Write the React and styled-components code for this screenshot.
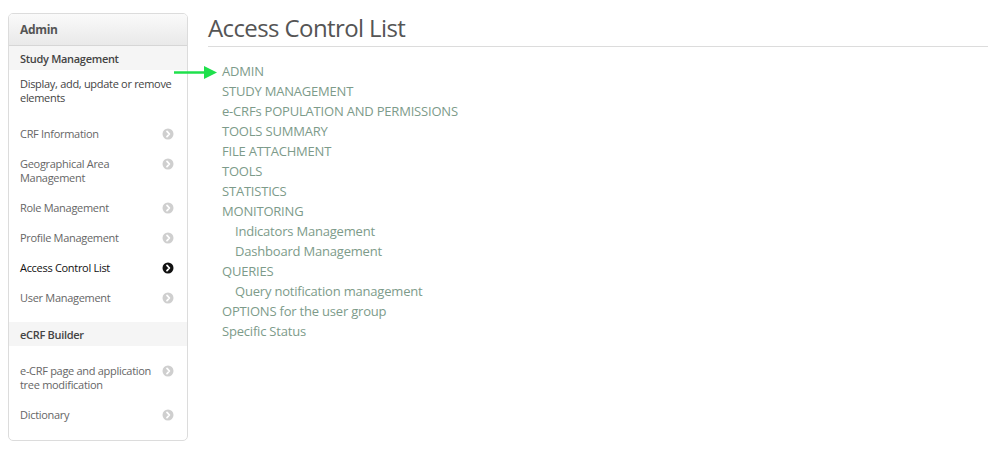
import React from "react";
import styled, { createGlobalStyle } from "styled-components";

const GlobalStyle = createGlobalStyle`
  body {
    margin: 0;
    background: #fff;
    font-family: "Open Sans", "Liberation Sans", sans-serif;
  }
`;

const Page = styled.div`
  display: flex;
  align-items: flex-start;
  gap: 20px;
  padding: 13px 7px 0 8px;
`;

const Sidebar = styled.aside`
  width: 178px;
  flex: none;
  border: 1px solid #dcdcdc;
  border-radius: 5px;
  overflow: hidden;
  background: #fff;
  letter-spacing: -0.3px;
`;

const SidebarTitle = styled.div`
  height: 31px;
  display: flex;
  align-items: center;
  padding: 0 11px;
  font-size: 12px;
  font-weight: 700;
  color: #555;
  background: linear-gradient(#fafafa, #e9e9e9);
  border-bottom: 1px solid #d6d6d6;
`;

const SectionHeader = styled.div`
  height: 24px;
  display: flex;
  align-items: center;
  padding: 0 11px;
  font-size: 11px;
  font-weight: 600;
  color: #444;
  background: #f5f5f5;
`;

const Description = styled.p`
  margin: 0;
  padding: 7px 11px 4px;
  font-size: 11px;
  line-height: 14px;
  color: #444;
`;

const ItemList = styled.ul`
  list-style: none;
  margin: 0;
  padding: 10px 0 ${(props) => props.$bottom || "10px"};
`;

const Item = styled.li`
  display: flex;
  align-items: flex-start;
  justify-content: space-between;
  padding: 8px 13px 8px 11px;
  font-size: 11px;
  line-height: 14px;
  color: ${(props) => (props.$active ? "#111" : "#666")};
`;

const ItemLabel = styled.span`
  max-width: 140px;
`;

const Chevron = ({ active }) => (
  <svg width="12" height="12" viewBox="0 0 12 12" style={{ flex: "none", marginTop: 1 }}>
    <circle cx="6" cy="6" r="5.5" fill={active ? "#111" : "#cfcfcf"} />
    <path
      d="M5 3.4 L7.4 6 L5 8.6"
      fill="none"
      stroke="#fff"
      strokeWidth="1.8"
      strokeLinecap="round"
      strokeLinejoin="round"
    />
  </svg>
);

const Main = styled.main`
  flex: 1;
  min-width: 0;
`;

const Title = styled.h1`
  margin: 0;
  padding: 0 0 4px;
  font-size: 24px;
  font-weight: 400;
  line-height: 29px;
  letter-spacing: -0.6px;
  color: #555;
  border-bottom: 1px solid #dcdcdc;
`;

const AclList = styled.ul`
  list-style: none;
  margin: 0;
  padding: 14px 0 0 14px;
`;

const AclEntry = styled.li`
  position: relative;
  font-size: 13px;
  line-height: 20px;
  letter-spacing: -0.2px;
  color: #7d9b8a;
  padding-left: ${(props) => (props.$sub ? "13px" : "0")};
`;

// green marker arrow pointing at the first entry
const Pointer = styled.svg`
  position: absolute;
  left: -48px;
  top: 4px;
`;

const entries = [
  { label: "ADMIN", pointer: true },
  { label: "STUDY MANAGEMENT" },
  { label: "e-CRFs POPULATION AND PERMISSIONS" },
  { label: "TOOLS SUMMARY" },
  { label: "FILE ATTACHMENT" },
  { label: "TOOLS" },
  { label: "STATISTICS" },
  { label: "MONITORING" },
  { label: "Indicators Management", sub: true },
  { label: "Dashboard Management", sub: true },
  { label: "QUERIES" },
  { label: "Query notification management", sub: true },
  { label: "OPTIONS for the user group" },
  { label: "Specific Status" },
];

const studyItems = [
  "CRF Information",
  "Geographical Area Management",
  "Role Management",
  "Profile Management",
  "Access Control List",
  "User Management",
];

const builderItems = ["e-CRF page and application tree modification", "Dictionary"];

export default function App() {
  return (
    <>
      <GlobalStyle />
      <Page>
        <Sidebar>
          <SidebarTitle>Admin</SidebarTitle>
          <SectionHeader>Study Management</SectionHeader>
          <Description>Display, add, update or remove elements</Description>
          <ItemList $bottom="9px">
            {studyItems.map((label) => {
              const active = label === "Access Control List";
              return (
                <Item key={label} $active={active}>
                  <ItemLabel>{label}</ItemLabel>
                  <Chevron active={active} />
                </Item>
              );
            })}
          </ItemList>
          <SectionHeader>eCRF Builder</SectionHeader>
          <ItemList>
            {builderItems.map((label) => (
              <Item key={label}>
                <ItemLabel>{label}</ItemLabel>
                <Chevron />
              </Item>
            ))}
          </ItemList>
        </Sidebar>
        <Main>
          <Title>Access Control List</Title>
          <AclList>
            {entries.map((e) => (
              <AclEntry key={e.label} $sub={e.sub}>
                {e.pointer && (
                  <Pointer width="44" height="14" viewBox="0 0 44 14">
                    <line x1="0" y1="7.5" x2="32" y2="7.5" stroke="#1fe04c" strokeWidth="2.5" />
                    <polygon points="30,1 43,7.5 30,14" fill="#1fe04c" />
                  </Pointer>
                )}
                {e.label}
              </AclEntry>
            ))}
          </AclList>
        </Main>
      </Page>
    </>
  );
}
